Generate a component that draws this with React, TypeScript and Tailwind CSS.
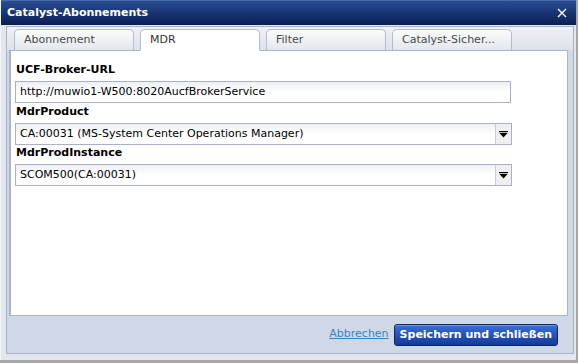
import React from "react";

const font = { fontFamily: '"DejaVu Sans", Verdana, sans-serif' };

function Tab({ label, active }: { label: string; active?: boolean }) {
  return (
    <div
      className={
        "w-[120px] h-[21px] rounded-t-[5px] border border-[#b3bccb] pl-[9px] text-[11px] leading-[19px] " +
        (active
          ? "bg-white border-b-white text-[#333] relative z-10 -mb-[1px] h-[22px]"
          : "bg-gradient-to-b from-[#fafbfc] to-[#e3e7ed] border-b-0 text-[#4a4a4a]")
      }
    >
      {label}
    </div>
  );
}

function Arrow() {
  return (
    <svg width="9" height="7" viewBox="0 0 9 7">
      <rect x="0" y="0" width="9" height="1.2" fill="#000" />
      <path d="M0.5 2 L8.5 2 L4.5 6.5 Z" fill="#000" />
    </svg>
  );
}

function Select({ value }: { value: string }) {
  return (
    <div className="flex h-[22px] w-[497px] border border-[#aab1c6] bg-gradient-to-b from-[#eef0f4] via-white to-white">
      <div className="flex-1 pl-[4px] text-[11px] leading-[20px] text-black">{value}</div>
      <div className="w-[16px] border-l border-[#c8ccd6] bg-[#efefef] flex items-center justify-center">
        <Arrow />
      </div>
    </div>
  );
}

export default function App() {
  return (
    <div className="w-[578px] h-[363px] bg-[#a7a7a7] overflow-hidden" style={font}>
      <div className="w-[576px] h-[360px] bg-[#e2e7ee] border-l border-[#f4f6f9] flex flex-col">
        <div className="h-[25px] flex items-center justify-between bg-gradient-to-b from-[#2a4d92] to-[#0a1e54] border-t border-[#4b69a6] pl-[6px] pr-[9px]">
          <span className="text-white font-bold text-[11px]">Catalyst-Abonnements</span>
          <svg width="10" height="10" viewBox="0 0 10 10">
            <path d="M1 1 L9 9 M9 1 L1 9" stroke="#fff" strokeWidth="1.4" />
          </svg>
        </div>
        <div className="flex-1 pl-[5px] pr-[2px] pt-[1px] pb-[6px] flex">
          <div className="flex-1 border border-[#a9b2c2] bg-[#cfd8e6] flex flex-col">
            <div className="h-[23px] bg-gradient-to-b from-[#eef1f5] to-[#dde2ea] flex items-end gap-[6px] pl-[7px]">
              <Tab label="Abonnement" />
              <Tab label="MDR" active />
              <Tab label="Filter" />
              <Tab label="Catalyst-Sicher..." />
            </div>
            <div className="h-[266px] ml-[2px] mr-[5px] border border-[#aeb6c5] border-l-2 bg-white px-[4px] pt-[11px]">
              <div className="font-bold text-[11px] leading-[16px] text-black pl-[1px] mb-[3px]">UCF-Broker-URL</div>
              <div className="h-[22px] w-[496px] border border-[#aab1c6] bg-gradient-to-b from-[#eef0f4] via-white to-white pl-[4px] text-[11px] leading-[20px] text-black">
                http://muwio1-W500:8020AucfBrokerService
              </div>
              <div className="font-bold text-[11px] leading-[16px] text-black pl-[1px] mt-[1px] mb-[3px]">MdrProduct</div>
              <Select value="CA:00031 (MS-System Center Operations Manager)" />
              <div className="font-bold text-[11px] leading-[16px] text-black pl-[1px] mb-[3px]">MdrProdInstance</div>
              <Select value="SCOM500(CA:00031)" />
            </div>
            <div className="flex-1 flex items-center justify-end gap-[5px] pr-[15px]">
              <span className="text-[11px] text-[#3a84c4] underline">Abbrechen</span>
              <div className="h-[22px] px-[5px] rounded-[3px] border border-[#0b2866] bg-gradient-to-b from-[#3a6fd6] to-[#143a98] text-white font-bold text-[11px] leading-[20px] shadow-[inset_0_1px_0_rgba(255,255,255,0.3)]">
                Speichern und schließen
              </div>
            </div>
          </div>
        </div>
      </div>
    </div>
  );
}
